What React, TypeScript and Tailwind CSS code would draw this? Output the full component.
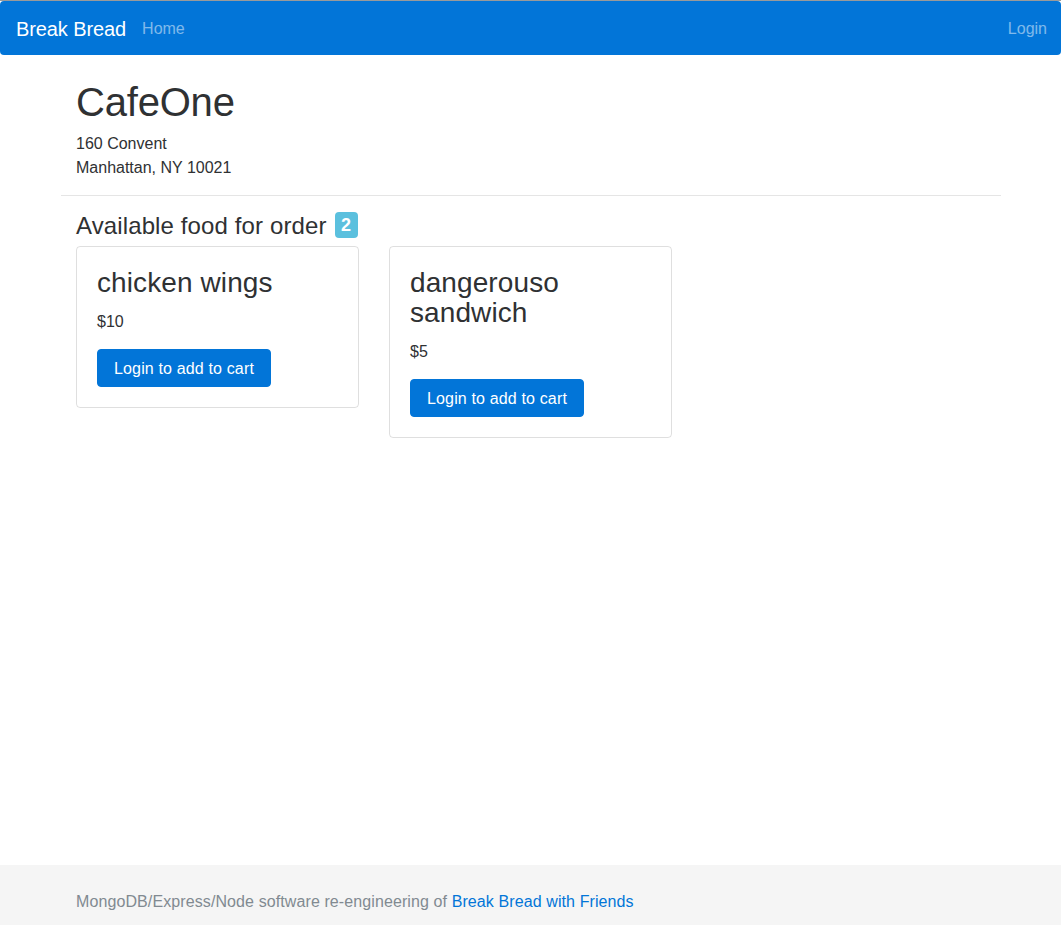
export default function App() {
  const foods = [
    { name: "chicken wings", price: "$10" },
    { name: "dangerouso sandwich", price: "$5" },
  ];
  return (
    <div
      className="min-h-screen flex flex-col bg-white text-[#2f3133]"
      style={{ fontFamily: '"Liberation Sans", Arial, sans-serif' }}
    >
      <div className="border-t border-[#9a9a9a]">
        <nav className="h-[54px] bg-[#0275d8] rounded-[4px] px-4 flex items-center">
          <span className="text-[20px] leading-[30px] text-white mr-4 pt-[1px] tracking-[-0.1px]">Break Bread</span>
          <span className="text-[16px] leading-[24px] text-white/50 pt-[1px]">Home</span>
          <span className="ml-auto mr-[-2px] text-[16px] leading-[24px] text-white/50 pt-[1px]">Login</span>
        </nav>
      </div>

      <main className="w-[940px] ml-[61px]">
        <div className="px-[15px] pt-[25px]">
          <h1 className="text-[40px] leading-[44px] mb-2 tracking-[-0.2px]">CafeOne</h1>
          <p className="text-[16px] leading-[24px]">160 Convent</p>
          <p className="text-[16px] leading-[24px]">Manhattan, NY 10021</p>
        </div>
        <hr className="mt-[15px] mb-4 border-0 border-t border-black/10" />
        <div className="px-[15px]">
          <h4 className="h-[26px] text-[24px] leading-[26px] mb-2 flex items-center tracking-[0.12px]">
            <span className="relative top-[1px]">Available food for order</span>
            <span className="ml-[8px] inline-flex items-center justify-center h-[26px] w-[23px] rounded-[4px] bg-[#5bc0de] text-white text-[18px] font-bold leading-none tracking-normal">
              2
            </span>
          </h4>
          <div className="flex items-start gap-[30px]">
            {foods.map((f) => (
              <div
                key={f.name}
                className="w-[283px] border border-black/[0.125] rounded-[4px] px-5 pt-[21px] pb-5"
              >
                <h3 className="text-[28px] leading-[30px] mb-3 tracking-[0.1px]">{f.name}</h3>
                <p className="text-[16px] leading-[24px] mb-[15px]">{f.price}</p>
                <button className="h-[38px] px-4 pt-[1px] rounded-[4px] bg-[#0275d8] text-white text-[16px] leading-[20px] border border-[#0275d8] tracking-[0.15px]">
                  Login to add to cart
                </button>
              </div>
            ))}
          </div>
        </div>
      </main>

      <footer className="mt-auto h-[60px] bg-[#f5f5f5]">
        <div className="w-[940px] ml-[61px] px-[15px] pt-[25px] text-[16px] leading-[24px] text-[#818a91] tracking-[0.1px]">
          MongoDB/Express/Node software re-engineering of{" "}
          <span className="text-[#0275d8]">Break Bread with Friends</span>
        </div>
      </footer>
    </div>
  );
}
